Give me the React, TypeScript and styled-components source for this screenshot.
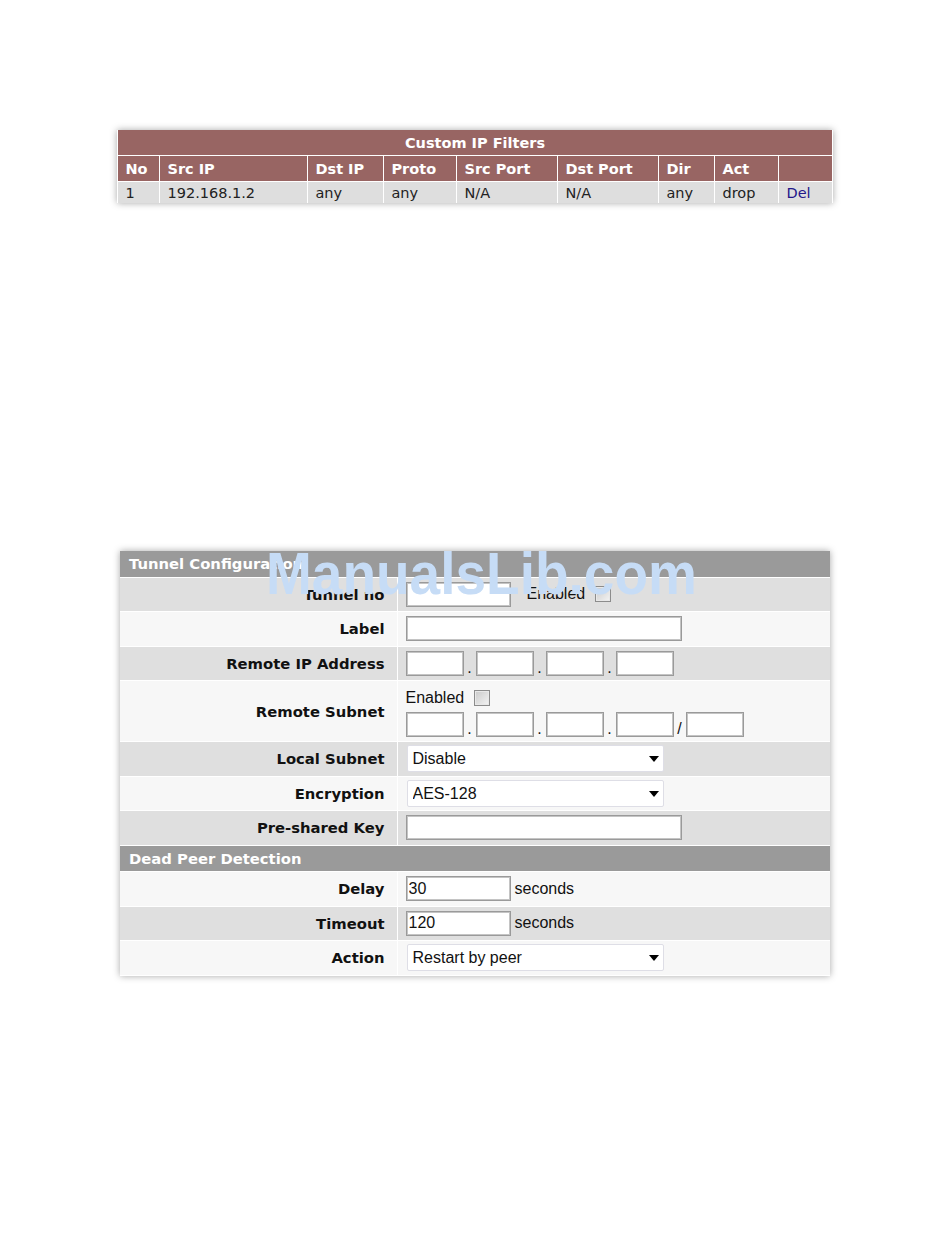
import styled, { createGlobalStyle } from "styled-components";

const GlobalStyle = createGlobalStyle`
  body {
    margin: 0;
    background: #fff;
    font-family: "DejaVu Sans", Verdana, sans-serif;
  }
`;

const filterColumns = [
  { title: "No", width: 42 },
  { title: "Src IP", width: 148 },
  { title: "Dst IP", width: 76 },
  { title: "Proto", width: 73 },
  { title: "Src Port", width: 101 },
  { title: "Dst Port", width: 101 },
  { title: "Dir", width: 56 },
  { title: "Act", width: 64 },
  { title: "", width: 53 },
];

const filters = [
  {
    no: 1,
    srcIp: "192.168.1.2",
    dstIp: "any",
    proto: "any",
    srcPort: "N/A",
    dstPort: "N/A",
    dir: "any",
    act: "drop",
  },
];

const IpFields = ({ mask }: { mask?: boolean }) => (
  <IpGroup>
    <Octet />
    <Dot>.</Dot>
    <Octet />
    <Dot>.</Dot>
    <Octet />
    <Dot>.</Dot>
    <Octet />
    {mask && (
      <>
        <Dot>/</Dot>
        <Octet />
      </>
    )}
  </IpGroup>
);

const Dropdown = ({ value, options }: { value: string; options: string[] }) => (
  <SelectBox>
    <Select defaultValue={value}>
      {options.map((o) => (
        <option key={o}>{o}</option>
      ))}
    </Select>
  </SelectBox>
);

const App = () => {
  return (
    <Page>
      <GlobalStyle />
      <FilterTable>
        <colgroup>
          {filterColumns.map((c, i) => (
            <col key={i} style={{ width: c.width }} />
          ))}
        </colgroup>
        <thead>
          <tr>
            <Caption colSpan={9}>Custom IP Filters</Caption>
          </tr>
          <tr>
            {filterColumns.map((c, i) => (
              <HeadCell key={i}>{c.title}</HeadCell>
            ))}
          </tr>
        </thead>
        <tbody>
          {filters.map((f) => (
            <tr key={f.no}>
              <DataCell>{f.no}</DataCell>
              <DataCell>{f.srcIp}</DataCell>
              <DataCell>{f.dstIp}</DataCell>
              <DataCell>{f.proto}</DataCell>
              <DataCell>{f.srcPort}</DataCell>
              <DataCell>{f.dstPort}</DataCell>
              <DataCell>{f.dir}</DataCell>
              <DataCell>{f.act}</DataCell>
              <DataCell>
                <DelLink href="#">Del</DelLink>
              </DataCell>
            </tr>
          ))}
        </tbody>
      </FilterTable>

      <ConfigWrap>
        <ConfigTable>
          <colgroup>
            <col style={{ width: 277 }} />
            <col />
          </colgroup>
          <tbody>
            <tr>
              <Section colSpan={2}>Tunnel Configuration</Section>
            </tr>
            <Row $shade="dark">
              <Label>Tunnel no</Label>
              <Value>
                <Inline>
                  <TextInput $w={105} />
                  <Note $gap={16}>Enabled</Note>
                  <Check type="checkbox" />
                </Inline>
              </Value>
            </Row>
            <Row $shade="light">
              <Label>Label</Label>
              <Value>
                <TextInput $w={276} />
              </Value>
            </Row>
            <Row $shade="dark">
              <Label>Remote IP Address</Label>
              <Value>
                <IpFields />
              </Value>
            </Row>
            <Row $shade="light">
              <Label>Remote Subnet</Label>
              <Value>
                <Stack>
                  <Inline>
                    <Note>Enabled</Note>
                    <Check type="checkbox" />
                  </Inline>
                  <IpFields mask />
                </Stack>
              </Value>
            </Row>
            <Row $shade="dark">
              <Label>Local Subnet</Label>
              <Value>
                <Dropdown value="Disable" options={["Disable", "Enable"]} />
              </Value>
            </Row>
            <Row $shade="light">
              <Label>Encryption</Label>
              <Value>
                <Dropdown value="AES-128" options={["AES-128", "AES-256", "3DES"]} />
              </Value>
            </Row>
            <Row $shade="dark">
              <Label>Pre-shared Key</Label>
              <Value>
                <TextInput $w={276} />
              </Value>
            </Row>
            <tr>
              <Section colSpan={2}>Dead Peer Detection</Section>
            </tr>
            <Row $shade="light">
              <Label>Delay</Label>
              <Value>
                <Inline>
                  <TextInput $w={105} defaultValue="30" />
                  <Note $gap={4}>seconds</Note>
                </Inline>
              </Value>
            </Row>
            <Row $shade="dark">
              <Label>Timeout</Label>
              <Value>
                <Inline>
                  <TextInput $w={105} defaultValue="120" />
                  <Note $gap={4}>seconds</Note>
                </Inline>
              </Value>
            </Row>
            <Row $shade="light">
              <Label>Action</Label>
              <Value>
                <Dropdown
                  value="Restart by peer"
                  options={["Restart by peer", "Hold", "Clear"]}
                />
              </Value>
            </Row>
          </tbody>
        </ConfigTable>
        <Watermark>ManualsLib.com</Watermark>
      </ConfigWrap>
    </Page>
  );
};

const Page = styled.div`
  display: flex;
  flex-direction: column;
  align-items: center;
  padding-top: 130px;
  min-height: 1130px;
`;

const FilterTable = styled.table`
  width: 714px;
  table-layout: fixed;
  border-collapse: collapse;
  box-shadow: 0 0 7px rgba(0, 0, 0, 0.35);
  font-size: 14.5px;
`;

const Caption = styled.th`
  height: 25px;
  padding: 0;
  background: #986563;
  color: #fff;
  font-weight: bold;
  text-align: center;
  border-bottom: 1px solid #fff;
`;

const HeadCell = styled.th`
  height: 25px;
  padding: 0 7px;
  background: #986563;
  color: #fff;
  font-weight: bold;
  text-align: left;
  border: 1px solid #fff;
  border-top: none;
  white-space: nowrap;
`;

const DataCell = styled.td`
  height: 21px;
  padding: 0 7px;
  background: #dedede;
  color: #222;
  border: 1px solid #fff;
  border-bottom: none;
  white-space: nowrap;
`;

const DelLink = styled.a`
  color: #24188a;
  text-decoration: none;
`;

const ConfigWrap = styled.div`
  position: relative;
  margin-top: 348px;
`;

const ConfigTable = styled.table`
  width: 710px;
  table-layout: fixed;
  border-collapse: collapse;
  box-shadow: 0 0 7px rgba(0, 0, 0, 0.35);
  font-size: 14.8px;
`;

const Section = styled.th`
  height: 25.5px;
  padding: 0 9px;
  background: #9a9a9a;
  color: #fff;
  font-weight: bold;
  text-align: left;
  border-bottom: 1px solid #fff;
`;

const Row = styled.tr<{ $shade: "dark" | "light" }>`
  background: ${(p) => (p.$shade === "dark" ? "#dfdfdf" : "#f7f7f7")};
  & > th,
  & > td {
    border-bottom: 1px solid #fff;
  }
`;

const Label = styled.th`
  height: 33.5px;
  padding: 0 12px 0 0;
  text-align: right;
  font-weight: bold;
  color: #111;
  border-right: 1px solid #fff;
  white-space: nowrap;
`;

const Value = styled.td`
  padding: 0 8px;
  font-family: "Liberation Sans", Arial, sans-serif;
  font-size: 16px;
  color: #111;
`;

const Inline = styled.div`
  display: flex;
  align-items: center;
`;

const Stack = styled.div`
  display: flex;
  flex-direction: column;
  gap: 5px;
  padding: 8px 0 4px;
`;

const Note = styled.span<{ $gap?: number }>`
  margin-left: ${(p) => p.$gap ?? 0}px;
  margin-right: 10px;
  line-height: 18px;
`;

const TextInput = styled.input<{ $w: number }>`
  box-sizing: border-box;
  width: ${(p) => p.$w}px;
  height: 25px;
  margin: 0;
  padding: 0 2px;
  border: 1px solid #9a9a9a;
  box-shadow: inset 0 0 0 1px #c4c4c4;
  background: #fff;
  font-family: "Liberation Sans", Arial, sans-serif;
  font-size: 16px;
  color: #111;
  outline: none;
`;

const Check = styled.input`
  appearance: none;
  box-sizing: border-box;
  width: 16px;
  height: 16px;
  margin: 0;
  border: 1px solid #8c8c8c;
  background: linear-gradient(135deg, #c9c9c9, #f4f4f4);
  box-shadow: inset 0 0 0 1px #e8e8e8;
`;

const IpGroup = styled.div`
  display: flex;
  align-items: flex-end;
`;

const Octet = styled(TextInput).attrs({ $w: 58 })``;

const Dot = styled.span`
  width: 12px;
  text-align: center;
  font-size: 16px;
  line-height: 16px;
  color: #111;
`;

const SelectBox = styled.div`
  position: relative;
  width: 257px;
  height: 27px;
  margin-left: 1px;
  &::after {
    content: "";
    position: absolute;
    right: 5px;
    top: 11px;
    border-left: 5px solid transparent;
    border-right: 5px solid transparent;
    border-top: 6px solid #000;
    pointer-events: none;
  }
`;

const Select = styled.select`
  appearance: none;
  box-sizing: border-box;
  width: 100%;
  height: 100%;
  margin: 0;
  padding: 0 5px;
  border: 1px solid #dedee6;
  border-radius: 2px;
  background: #fff;
  font-family: "Liberation Sans", Arial, sans-serif;
  font-size: 16px;
  color: #111;
  outline: none;
`;

const Watermark = styled.div`
  position: absolute;
  left: 146px;
  top: -3px;
  font-family: "Liberation Sans", Arial, sans-serif;
  font-weight: bold;
  font-size: 55px;
  line-height: 1;
  color: #c6dcf6;
  white-space: nowrap;
  pointer-events: none;
  transform: scaleY(1.07);
  transform-origin: 0 47px;
`;

export default App;
